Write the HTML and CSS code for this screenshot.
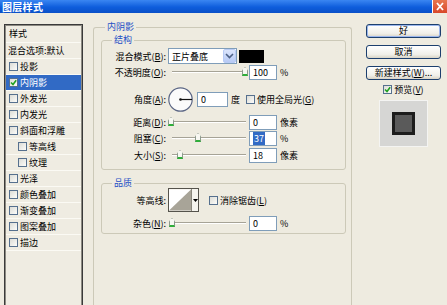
FILE: index.html
```html
<!DOCTYPE html>
<html lang="zh-CN">
<head>
    <meta charset="UTF-8">
    <title>图层样式</title>
    <link rel="stylesheet" href="styles.css">
</head>
<body>
    <div class="titlebar">
        <span class="title">图层样式</span>
        <span class="close">
            <svg width="12" height="11" viewBox="0 0 12 11"><path d="M3 2 L9 9 M9 2 L3 9" stroke="#fff" stroke-width="1.8"/></svg>
        </span>
    </div>
    <div class="dialog">
        <div class="styles-list">
            <div class="list-head">样式</div>
            <div class="list-row plain">混合选项:默认</div>
            <div class="list-row"><span class="cb"></span>投影</div>
            <div class="list-row selected"><span class="cb"><svg width="7" height="7" viewBox="0 0 7 7"><path d="M1 3.5 L3 5.5 L6.2 1.2" stroke="#21a121" stroke-width="1.6" fill="none"/></svg></span>内阴影</div>
            <div class="list-row"><span class="cb"></span>外发光</div>
            <div class="list-row"><span class="cb"></span>内发光</div>
            <div class="list-row"><span class="cb"></span>斜面和浮雕</div>
            <div class="list-row sub"><span class="cb"></span>等高线</div>
            <div class="list-row sub"><span class="cb"></span>纹理</div>
            <div class="list-row"><span class="cb"></span>光泽</div>
            <div class="list-row"><span class="cb"></span>颜色叠加</div>
            <div class="list-row"><span class="cb"></span>渐变叠加</div>
            <div class="list-row"><span class="cb"></span>图案叠加</div>
            <div class="list-row"><span class="cb"></span>描边</div>
        </div>

        <div class="main">
            <div class="group outer">
                <span class="group-title">内阴影</span>
                <div class="group structure">
                    <span class="group-title">结构</span>
                    <div class="row r-blend">
                        <span class="lbl">混合模式(<u>B</u>):</span>
                        <div class="select">
                            <span class="select-text">正片叠底</span>
                            <span class="select-btn"><svg width="9" height="6" viewBox="0 0 9 6"><path d="M1 1 L4.5 4.5 L8 1" stroke="#4d6185" stroke-width="1.6" fill="none"/></svg></span>
                        </div>
                        <div class="swatch"></div>
                    </div>
                    <div class="row">
                        <span class="lbl">不透明度(<u>O</u>):</span>
                        <div class="slider"><span class="thumb" style="left:75px"></span></div>
                        <div class="num">100</div>
                        <span class="unit">%</span>
                    </div>
                    <div class="row r-angle">
                        <span class="lbl">角度(<u>A</u>):</span>
                        <svg class="dial" width="25" height="25" viewBox="0 0 25 25">
                            <circle cx="12.5" cy="12.5" r="11.7" fill="#fbfbfb" stroke="#5b6684" stroke-width="1.2"/>
                            <line x1="12.5" y1="12.5" x2="24" y2="12.5" stroke="#111" stroke-width="1.2"/>
                            <circle cx="12.5" cy="12.5" r="1.3" fill="#111"/>
                        </svg>
                        <div class="num wide">0</div>
                        <span class="unit">度</span>
                        <span class="cb gap"></span>
                        <span class="check-text">使用全局光(<u>G</u>)</span>
                    </div>
                    <div class="row r-dist">
                        <span class="lbl">距离(<u>D</u>):</span>
                        <div class="slider"><span class="thumb" style="left:1px"></span></div>
                        <div class="num">0</div>
                        <span class="unit">像素</span>
                    </div>
                    <div class="row">
                        <span class="lbl">阻塞(<u>C</u>):</span>
                        <div class="slider"><span class="thumb" style="left:28px"></span></div>
                        <div class="num"><span class="sel">37</span></div>
                        <span class="unit">%</span>
                    </div>
                    <div class="row r-size">
                        <span class="lbl">大小(<u>S</u>):</span>
                        <div class="slider"><span class="thumb" style="left:10px"></span></div>
                        <div class="num">18</div>
                        <span class="unit">像素</span>
                    </div>
                </div>

                <div class="group quality">
                    <span class="group-title">品质</span>
                    <div class="row r-contour">
                        <span class="lbl">等高线:</span>
                        <div class="contour">
                            <svg width="23" height="22" viewBox="0 0 23 22"><rect width="23" height="22" fill="#fff"/><path d="M0 22 L23 0 L23 22 Z" fill="#a8a498"/></svg>
                            <span class="contour-btn"><svg width="5" height="3" viewBox="0 0 5 3"><path d="M0 0 H5 L2.5 3 Z" fill="#000"/></svg></span>
                        </div>
                        <span class="cb gap-wide"></span>
                        <span class="check-text">消除锯齿(<u>L</u>)</span>
                    </div>
                    <div class="row r-noise">
                        <span class="lbl">杂色(<u>N</u>):</span>
                        <div class="slider"><span class="thumb" style="left:2px"></span></div>
                        <div class="num">0</div>
                        <span class="unit">%</span>
                    </div>
                </div>
            </div>
        </div>

        <div class="side">
            <div class="btn default">好</div>
            <div class="btn">取消</div>
            <div class="btn">新建样式(<u>W</u>)...</div>
            <div class="preview-check">
                <span class="cb"><svg width="7" height="7" viewBox="0 0 7 7"><path d="M1 3.5 L3 5.5 L6.2 1.2" stroke="#21a121" stroke-width="1.6" fill="none"/></svg></span>
                <span class="check-text">预览(<u>V</u>)</span>
            </div>
            <div class="preview"><div class="preview-square"></div></div>
        </div>
    </div>
</body>
</html>
```

FILE: styles.css
```css
html, body { margin: 0; padding: 0; }
body { width: 447px; height: 305px; overflow: hidden; background: #eeebe0; font-family: "Noto Sans CJK SC", "Noto Sans", sans-serif; font-size: 9px; color: #000; }
u { text-decoration: underline; text-underline-offset: 1px; }

.titlebar { height: 13px; display: flex; justify-content: space-between; background: linear-gradient(#3a86f2, #0e5ddc 55%, #0a50c8); }
.title { color: #fff; font-weight: bold; font-size: 10px; line-height: 13px; padding-left: 2px; letter-spacing: 0.3px; }
.close { width: 15px; height: 13px; background: linear-gradient(#e8764f, #d8482a); border-left: 1px solid #fff; display: flex; align-items: center; justify-content: center; box-sizing: border-box; }

.dialog { display: flex; padding: 11px 0 0 4px; }

.styles-list { width: 79px; height: 281px; box-sizing: border-box; border: 1px solid #3a3a3a; border-bottom: none; box-shadow: inset 1px 1px 0 #8c8a82, inset -1px 0 0 #8c8a82; background: #efece2; padding: 0 1px; }
.list-head { height: 17px; line-height: 17px; padding-left: 3px; border-bottom: 1px solid #fbfaf4; }
.list-row { height: 15px; line-height: 15px; display: flex; align-items: center; border-bottom: 1px solid #fbfaf4; padding-left: 3px; }
.list-row.plain { padding-left: 2px; }
.list-row.sub { padding-left: 12px; }
.list-row .cb { margin-right: 2px; }
.list-row.selected { background: #316ac5; color: #fff; }

.cb { width: 9px; height: 9px; box-sizing: border-box; border: 1px solid #56708e; background: linear-gradient(135deg, #dcdcd6, #fcfcfa); display: inline-flex; align-items: center; justify-content: center; flex-shrink: 0; }

.main { margin-left: 10px; width: 259px; }
.group { position: relative; border: 1px solid #ccc9b8; border-radius: 3px; box-sizing: border-box; }
.group-title { position: absolute; top: -7px; left: 10px; padding: 0 2px; line-height: 12px; background: #eeebe0; color: #1f4fc6; }
.outer { margin-top: 3px; height: 278px; padding: 12px 5px 0 7px; border-bottom: none; border-radius: 3px 3px 0 0; }
.outer > .group-title { left: 11px; }
.structure { height: 130px; }
.quality { height: 51px; margin-top: 13px; }

.row { display: flex; align-items: center; height: 16px; }
.lbl { width: 64px; text-align: right; flex-shrink: 0; white-space: nowrap; }
.r-blend { margin-top: 7px; }
.r-angle { height: 25px; margin-top: 7px; }
.r-dist { margin-top: 2px; }
.r-size { margin-top: 1px; }
.r-contour { height: 24px; margin-top: 4px; }
.r-noise { margin-top: 3px; }

.select { margin-left: 2px; width: 69px; height: 16px; box-sizing: border-box; border: 1px solid #7f9db9; background: #fff; display: flex; justify-content: space-between; align-items: center; }
.select-text { padding-left: 3px; }
.select-btn { width: 13px; height: 14px; box-sizing: border-box; border: 1px solid #b8cbf5; border-radius: 2px; background: linear-gradient(#dbe5fc, #b7caf5); display: flex; align-items: center; justify-content: center; }
.swatch { margin-left: 2px; width: 25px; height: 13px; background: #000; }

.slider { position: relative; width: 80px; height: 16px; margin-left: 1px; flex-shrink: 0; }
.slider::before { content: ""; position: absolute; left: 5px; right: 1px; top: 7px; border-top: 1px solid #a6a396; border-bottom: 1px solid #fff; }
.thumb { position: absolute; top: 3px; width: 6px; height: 9px; box-sizing: border-box; background: #f7f7f2; border: 1px solid #8c9a8c; border-bottom: 2px solid #2fae3a; clip-path: polygon(50% 0, 100% 35%, 100% 100%, 0 100%, 0 35%); }

.num { margin-left: 2px; width: 28px; height: 15px; box-sizing: border-box; border: 1px solid #7f9db9; background: #fff; padding-left: 3px; line-height: 13px; flex-shrink: 0; }
.num.wide { margin-left: 4px; width: 31px; }
.sel { background: #316ac5; color: #fff; padding: 0 1px; }
.unit { margin-left: 3px; }
.dial { margin-left: 2px; flex-shrink: 0; }
.cb.gap { margin-left: 6px; }
.cb.gap-wide { margin-left: 10px; }
.check-text { margin-left: 2px; white-space: nowrap; }

.contour { margin-left: 2px; width: 31px; height: 24px; box-sizing: border-box; border: 1px solid #55534c; display: flex; }
.contour svg { display: block; }
.contour-btn { width: 6px; border-left: 1px solid #8a877c; background: #f5f4ee; display: flex; align-items: center; justify-content: center; }

.side { margin-left: 14px; width: 75px; display: flex; flex-direction: column; }
.btn { height: 14px; box-sizing: border-box; border: 1px solid #1c3f6e; border-radius: 3px; background: linear-gradient(#ffffff, #f0efe9 70%, #d9d4c6); text-align: center; line-height: 12px; margin-bottom: 7px; }
.btn.default { box-shadow: inset 0 0 0 1px #9bb6ec; }
.preview-check { display: flex; align-items: center; justify-content: center; height: 12px; margin-top: -4px; }
.preview { margin: 5px auto 0; width: 49px; height: 47px; box-sizing: border-box; border: 1px solid #f4f4f2; background: #d6d6d4; display: flex; align-items: center; justify-content: center; }
.preview-square { width: 23px; height: 23px; box-sizing: border-box; border: 3px solid #1c1c1c; background: #5a5a5a; }
```
